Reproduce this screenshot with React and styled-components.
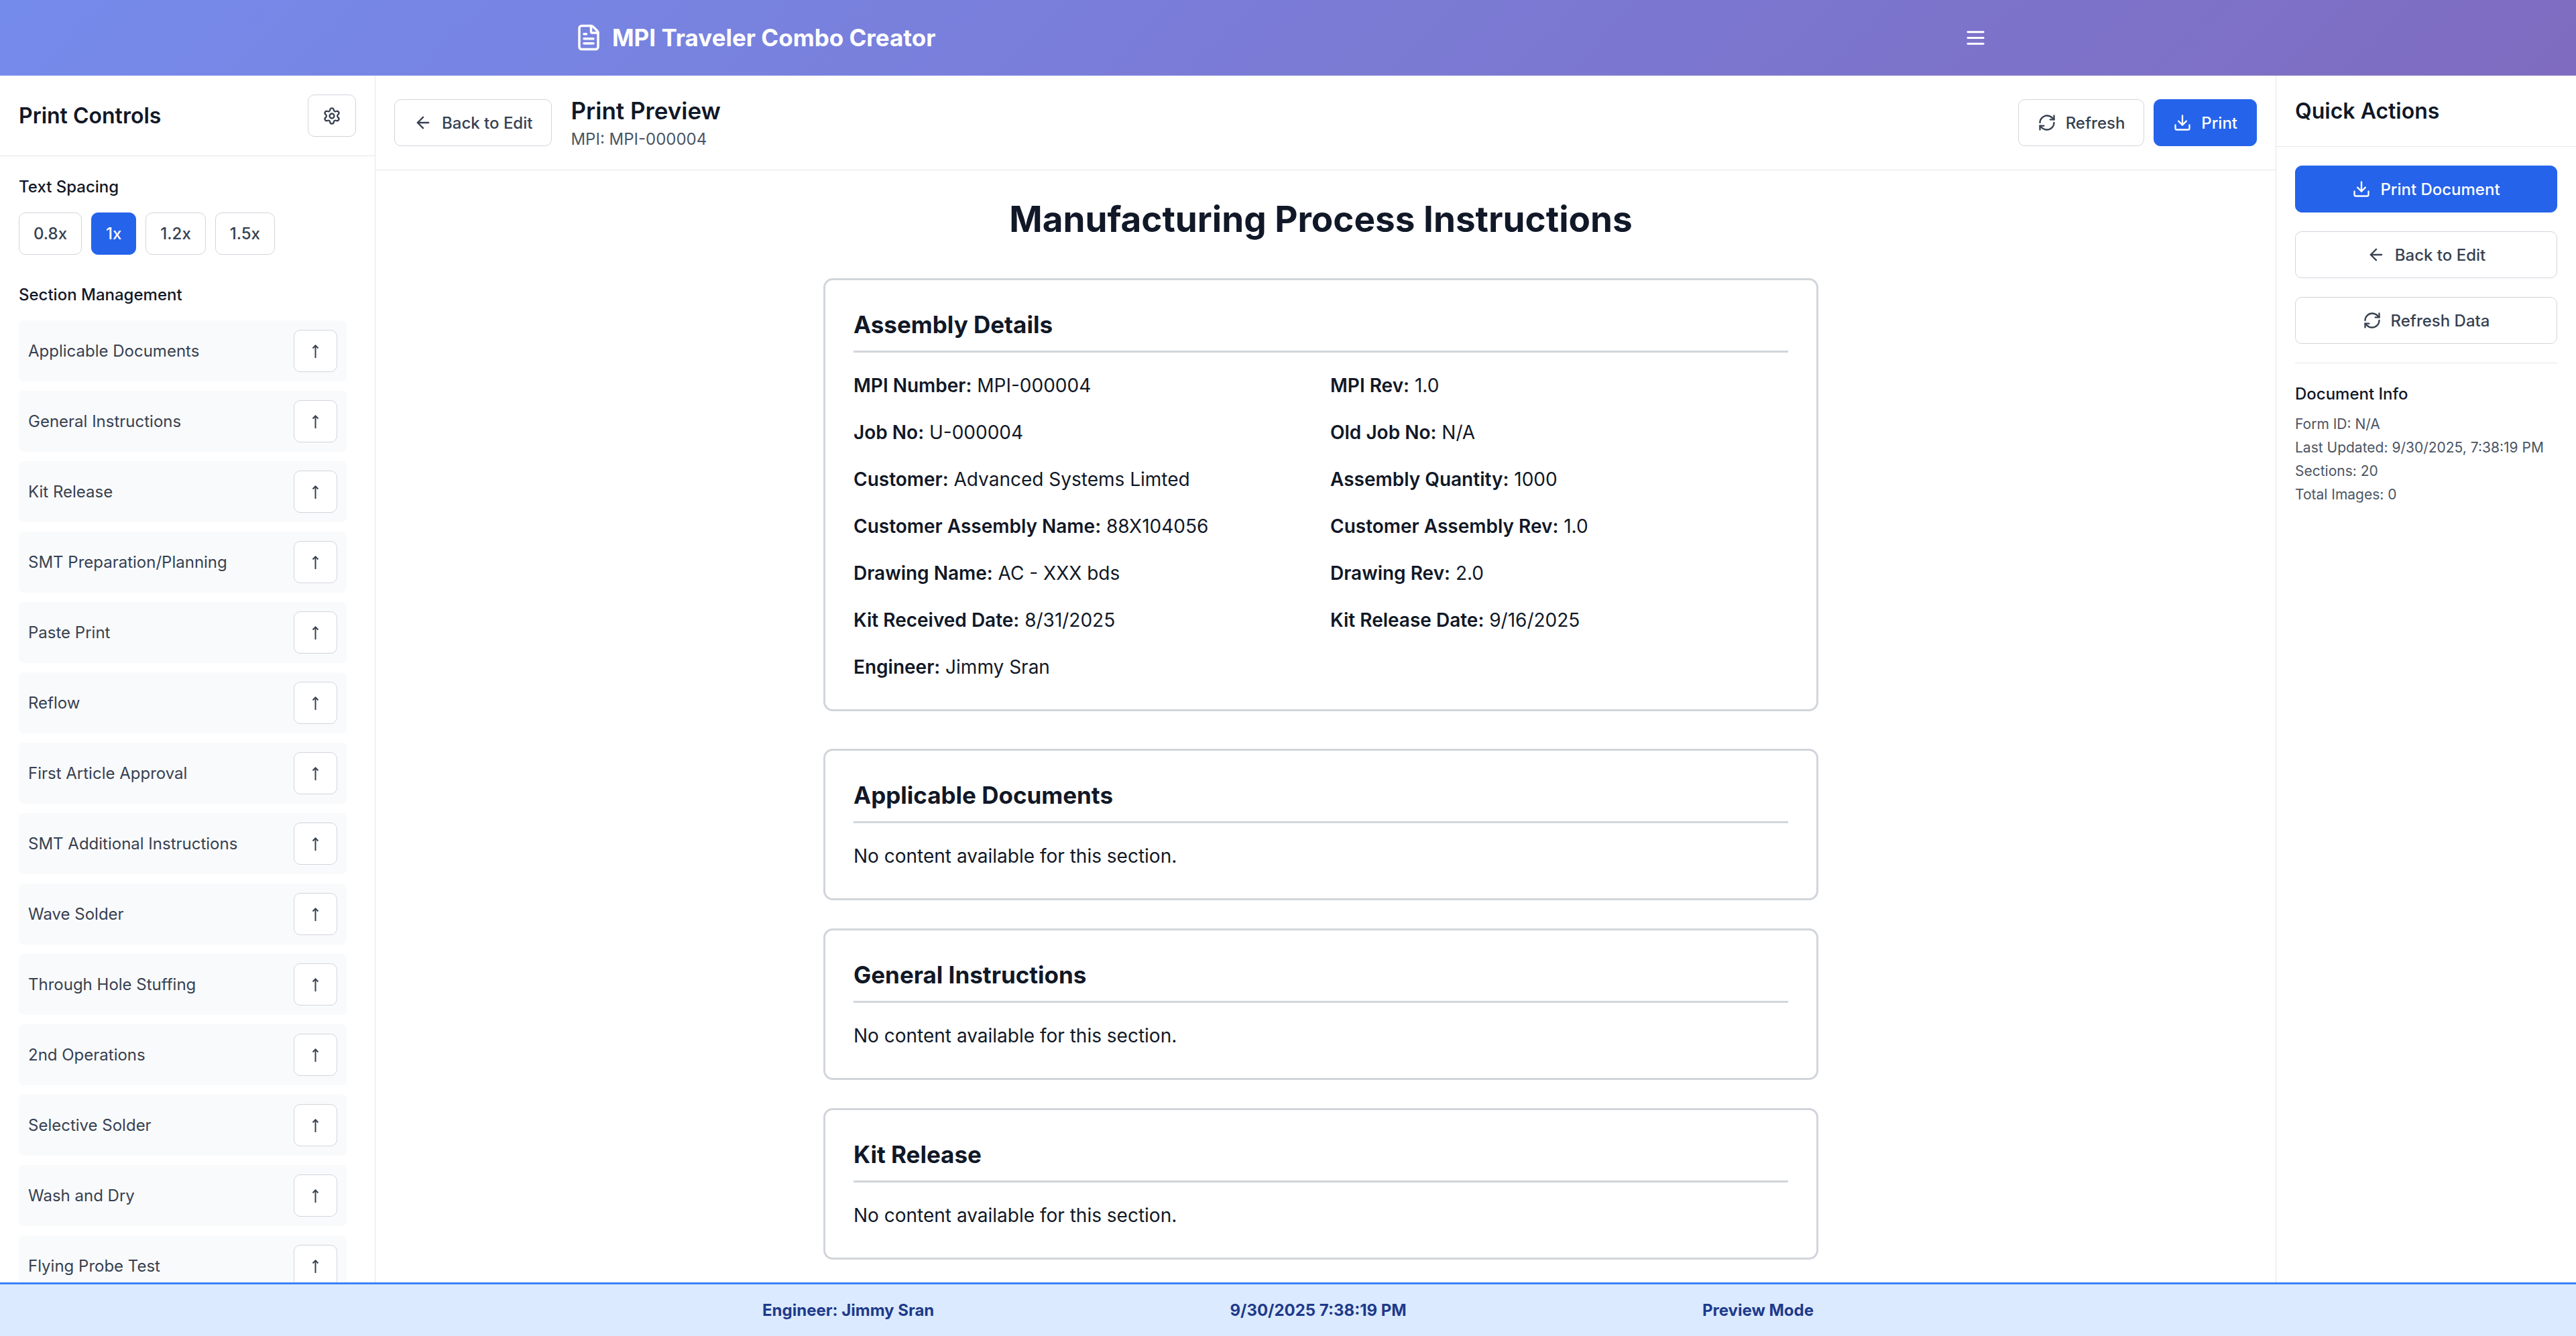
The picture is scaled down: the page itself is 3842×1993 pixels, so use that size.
import React, { useState } from "react";
import styled, { createGlobalStyle, css } from "styled-components";
import { ArrowLeft, Download, FileText, RefreshCw, Settings } from "lucide-react";

const GlobalStyle = createGlobalStyle`
  *, *::before, *::after { box-sizing: border-box; }
  body { margin: 0; }
  h1, h2, h3, p, ul { margin: 0; padding: 0; }
  button { font-family: inherit; cursor: pointer; }
`;

const color = {
  ink: "#111827",
  body: "#374151",
  muted: "#4b5563",
  line: "#e5e7eb",
  border: "#d1d5db",
  blue: "#2563eb",
};

const Page = styled.div`
  display: flex;
  flex-direction: column;
  height: 100vh;
  overflow: hidden;
  background: linear-gradient(135deg, #667eea 0%, #764ba2 100%);
  font-family: Inter, "Liberation Sans", sans-serif;
  font-size: 28px;
  line-height: 42px;
  color: ${color.ink};
`;

const TopBar = styled.header`
  flex: none;
  background: rgba(255, 255, 255, 0.1);
  border-bottom: 1px solid rgba(255, 255, 255, 0.2);
`;

const TopBarInner = styled.div`
  display: flex;
  align-items: center;
  justify-content: space-between;
  width: 100%;
  max-width: 2240px;
  height: 112px;
  margin: 0 auto;
  padding: 0 56px;
  color: #fff;
`;

const Brand = styled.div`
  display: flex;
  align-items: center;
  gap: 14px;
`;

const BrandName = styled.h1`
  font-size: 35px;
  line-height: 49px;
  font-weight: 700;
`;

const MenuButton = styled.button`
  display: flex;
  padding: 14px 21px;
  border: 0;
  background: none;
  color: inherit;
`;

const Workspace = styled.div`
  flex: 1;
  display: flex;
  min-height: 0;
  background: #fff;
`;

const LeftPanel = styled.aside`
  flex: none;
  display: flex;
  flex-direction: column;
  width: 560px;
  border-right: 1px solid ${color.line};
`;

const RightPanel = styled.aside`
  flex: none;
  width: 448px;
  border-left: 1px solid ${color.line};
`;

const PanelHeader = styled.div`
  flex: none;
  display: flex;
  align-items: center;
  justify-content: space-between;
  padding: 28px;
  border-bottom: 1px solid ${color.line};
`;

const PanelTitle = styled.h2`
  font-size: 32px;
  line-height: 49px;
  font-weight: 600;
`;

const GroupTitle = styled.h3`
  font-size: 24px;
  line-height: 35px;
  font-weight: 500;
`;

const Button = styled.button`
  display: inline-flex;
  align-items: center;
  justify-content: center;
  gap: 14px;
  height: 70px;
  padding: 0 28px;
  border: 1px solid ${color.border};
  border-radius: 10px;
  background: #fff;
  color: ${color.body};
  font-size: 24px;
  line-height: 35px;
  font-weight: 500;
  white-space: nowrap;

  ${(p) => p.$small && css`
    height: 63px;
    padding: 0 21px;
  `}
  ${(p) => p.$primary && css`
    border-color: ${color.blue};
    background: ${color.blue};
    color: #fff;
  `}
`;

const Controls = styled.div`
  flex: 1;
  display: flex;
  flex-direction: column;
  gap: 42px;
  min-height: 0;
  padding: 28px 28px 0;
  overflow: hidden;
`;

const ControlGroup = styled.section`
  flex: none;
  display: flex;
  flex-direction: column;
  gap: 21px;
`;

const SpacingRow = styled.div`
  display: flex;
  gap: 14px;
`;

const SectionList = styled.ul`
  display: flex;
  flex-direction: column;
  gap: 14px;
  padding-right: 14px;
  list-style: none;
`;

const SectionItem = styled.li`
  display: flex;
  align-items: center;
  justify-content: space-between;
  padding: 14px;
  border-radius: 7px;
  background: #f9fafb;
  color: ${color.body};
  font-size: 24px;
  line-height: 35px;
`;

const Main = styled.main`
  flex: 1;
  display: flex;
  flex-direction: column;
  min-width: 0;
`;

const Toolbar = styled.div`
  flex: none;
  display: flex;
  align-items: center;
  justify-content: space-between;
  padding: 28px;
  border-bottom: 1px solid ${color.line};
`;

const ToolbarGroup = styled.div`
  display: flex;
  align-items: center;
  gap: ${(p) => (p.$wide ? "28px" : "14px")};
`;

const ToolbarTitle = styled.h2`
  font-size: 35px;
  line-height: 49px;
  font-weight: 600;
`;

const ToolbarNote = styled.p`
  font-size: 24px;
  line-height: 35px;
  color: ${color.muted};
`;

const Preview = styled.div`
  flex: 1;
  min-height: 0;
  padding-right: 14px;
  overflow: hidden;
`;

const Sheet = styled.article`
  max-width: 1568px;
  margin: 0 auto;
  padding: 42px;
`;

const SheetTitle = styled.h1`
  margin-bottom: 56px;
  font-size: 53px;
  line-height: 63px;
  font-weight: 700;
  text-align: center;
`;

const Sections = styled.div`
  display: flex;
  flex-direction: column;
  gap: 42px;
  margin-top: 56px;
`;

const Card = styled.section`
  padding: 42px;
  border: 3px solid ${color.border};
  border-radius: 14px;
`;

const CardTitle = styled.h2`
  margin-bottom: 28px;
  padding-bottom: 14px;
  border-bottom: 3px solid ${color.border};
  font-size: 35px;
  line-height: 49px;
  font-weight: 700;
`;

const DetailGrid = styled.div`
  display: grid;
  grid-template-columns: 1fr 1fr;
  gap: 28px;
`;

const Label = styled.strong`
  font-weight: 600;
`;

const Actions = styled.div`
  display: flex;
  flex-direction: column;
  gap: 28px;
  padding: 28px;
`;

const DocumentInfo = styled.section`
  padding-top: 28px;
  border-top: 1px solid ${color.line};
`;

const InfoList = styled.ul`
  display: flex;
  flex-direction: column;
  gap: 7px;
  margin-top: 14px;
  color: ${color.muted};
  font-size: 21px;
  line-height: 28px;
  list-style: none;
`;

const StatusBar = styled.footer`
  flex: none;
  padding: 21px 0;
  border-top: 3px solid #3b82f6;
  background: #dbeafe;
`;

const StatusInner = styled.div`
  display: flex;
  justify-content: space-between;
  max-width: 1568px;
  margin: 0 auto;
  color: #1e3a8a;
  font-size: 24px;
  line-height: 35px;
  font-weight: 700;
`;

const MenuIcon = () => (
  <svg
    width="35"
    height="35"
    viewBox="0 0 24 24"
    fill="none"
    stroke="currentColor"
    strokeWidth="2"
    strokeLinecap="round"
    aria-hidden="true"
  >
    <path d="M4 6h16M4 12h16M4 18h16" />
  </svg>
);

const UpIcon = () => (
  <svg
    width="21"
    height="28"
    viewBox="0 0 21 28"
    fill="none"
    stroke="currentColor"
    strokeWidth="2"
    aria-hidden="true"
  >
    <path d="M10.5 5v19" />
    <path d="M6.5 9.5l4-4 4 4" />
  </svg>
);

const spacings = ["0.8x", "1x", "1.2x", "1.5x"];

const sections = [
  "Applicable Documents",
  "General Instructions",
  "Kit Release",
  "SMT Preparation/Planning",
  "Paste Print",
  "Reflow",
  "First Article Approval",
  "SMT Additional Instructions",
  "Wave Solder",
  "Through Hole Stuffing",
  "2nd Operations",
  "Selective Solder",
  "Wash and Dry",
  "Flying Probe Test",
];

const details = [
  ["MPI Number", "MPI-000004"],
  ["MPI Rev", "1.0"],
  ["Job No", "U-000004"],
  ["Old Job No", "N/A"],
  ["Customer", "Advanced Systems Limted"],
  ["Assembly Quantity", "1000"],
  ["Customer Assembly Name", "88X104056"],
  ["Customer Assembly Rev", "1.0"],
  ["Drawing Name", "AC - XXX bds"],
  ["Drawing Rev", "2.0"],
  ["Kit Received Date", "8/31/2025"],
  ["Kit Release Date", "9/16/2025"],
  ["Engineer", "Jimmy Sran"],
];

const info = [
  "Form ID: N/A",
  "Last Updated: 9/30/2025, 7:38:19 PM",
  "Sections: 20",
  "Total Images: 0",
];

export default function App() {
  const [spacing, setSpacing] = useState("1x");

  return (
    <Page>
      <GlobalStyle />
      <TopBar>
        <TopBarInner>
          <Brand>
            <FileText size={42} />
            <BrandName>MPI Traveler Combo Creator</BrandName>
          </Brand>
          <MenuButton aria-label="Menu">
            <MenuIcon />
          </MenuButton>
        </TopBarInner>
      </TopBar>

      <Workspace>
        <LeftPanel>
          <PanelHeader>
            <PanelTitle>Print Controls</PanelTitle>
            <Button $small aria-label="Settings">
              <Settings size={28} />
            </Button>
          </PanelHeader>
          <Controls>
            <ControlGroup>
              <GroupTitle>Text Spacing</GroupTitle>
              <SpacingRow>
                {spacings.map((value) => (
                  <Button
                    key={value}
                    $small
                    $primary={value === spacing}
                    aria-pressed={value === spacing}
                    onClick={() => setSpacing(value)}
                  >
                    {value}
                  </Button>
                ))}
              </SpacingRow>
            </ControlGroup>
            <ControlGroup>
              <GroupTitle>Section Management</GroupTitle>
              <SectionList>
                {sections.map((name) => (
                  <SectionItem key={name}>
                    <span>{name}</span>
                    <Button $small aria-label={`Move ${name} up`}>
                      <UpIcon />
                    </Button>
                  </SectionItem>
                ))}
              </SectionList>
            </ControlGroup>
          </Controls>
        </LeftPanel>

        <Main>
          <Toolbar>
            <ToolbarGroup $wide>
              <Button>
                <ArrowLeft size={28} />
                Back to Edit
              </Button>
              <div>
                <ToolbarTitle>Print Preview</ToolbarTitle>
                <ToolbarNote>MPI: MPI-000004</ToolbarNote>
              </div>
            </ToolbarGroup>
            <ToolbarGroup>
              <Button>
                <RefreshCw size={28} />
                Refresh
              </Button>
              <Button $primary>
                <Download size={28} />
                Print
              </Button>
            </ToolbarGroup>
          </Toolbar>
          <Preview>
            <Sheet>
              <SheetTitle>Manufacturing Process Instructions</SheetTitle>
              <Card>
                <CardTitle>Assembly Details</CardTitle>
                <DetailGrid>
                  {details.map(([label, value]) => (
                    <p key={label}>
                      <Label>{label}:</Label> {value}
                    </p>
                  ))}
                </DetailGrid>
              </Card>
              <Sections>
                {sections.slice(0, 3).map((name) => (
                  <Card key={name}>
                    <CardTitle>{name}</CardTitle>
                    <p>No content available for this section.</p>
                  </Card>
                ))}
              </Sections>
            </Sheet>
          </Preview>
        </Main>

        <RightPanel>
          <PanelHeader>
            <PanelTitle>Quick Actions</PanelTitle>
          </PanelHeader>
          <Actions>
            <Button $primary>
              <Download size={28} />
              Print Document
            </Button>
            <Button>
              <ArrowLeft size={28} />
              Back to Edit
            </Button>
            <Button>
              <RefreshCw size={28} />
              Refresh Data
            </Button>
            <DocumentInfo>
              <GroupTitle>Document Info</GroupTitle>
              <InfoList>
                {info.map((line) => (
                  <li key={line}>{line}</li>
                ))}
              </InfoList>
            </DocumentInfo>
          </Actions>
        </RightPanel>
      </Workspace>

      <StatusBar>
        <StatusInner>
          <span>Engineer: Jimmy Sran</span>
          <span>9/30/2025 7:38:19 PM</span>
          <span>Preview Mode</span>
        </StatusInner>
      </StatusBar>
    </Page>
  );
}
